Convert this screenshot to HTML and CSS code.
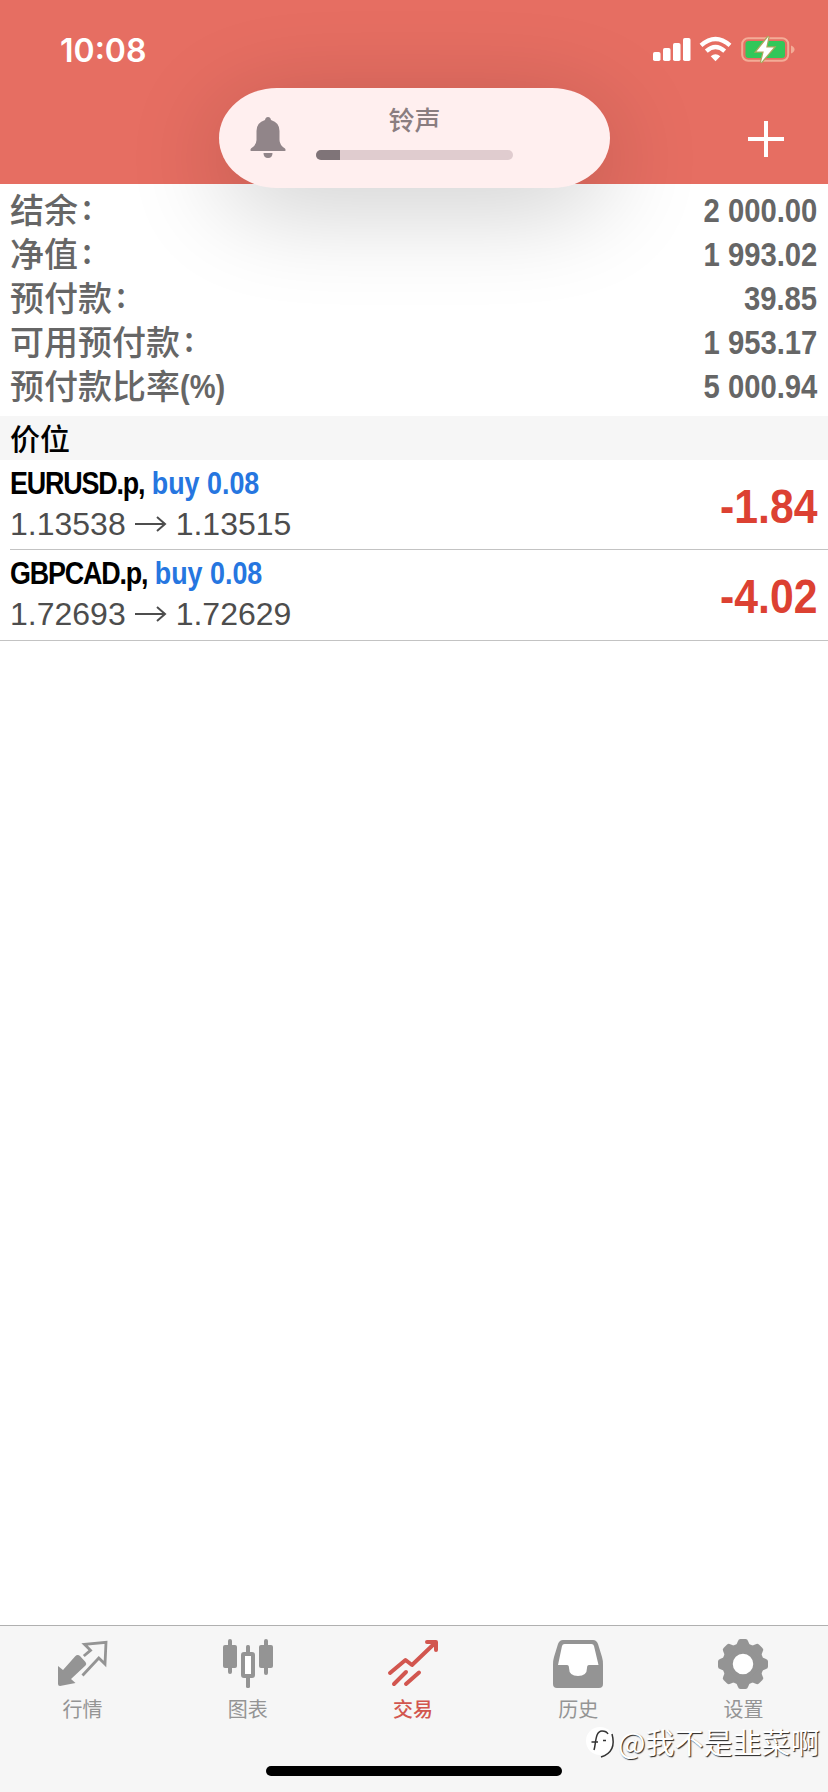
FILE: index.html
```html
<!DOCTYPE html>
<html lang="zh-CN">
<head>
<meta charset="utf-8">
<title>交易</title>
<link rel="stylesheet" href="styles.css">
</head>
<body>
<div class="screen">
  <header class="header">
    <div class="status">
      <span class="clock">10:08</span>
      <svg class="status-icons" width="146" height="30" viewBox="0 0 146 30">
        <g fill="#fff">
          <rect x="2" y="16" width="7.5" height="9" rx="1.8"/>
          <rect x="12" y="12" width="7.5" height="13" rx="1.8"/>
          <rect x="22" y="7" width="7.5" height="18" rx="1.8"/>
          <rect x="32" y="2" width="7.5" height="23" rx="1.8"/>
          <path d="M64.500 25.200 L59.700 20.300 Q64.500 16.300 69.300 20.300 Z"/>
        </g>
        <path d="M50 9.300 Q64.500 -3.500 79 9.300M55.300 15.200 Q64.500 7 73.700 15.200" fill="none" stroke="#fff" stroke-width="4.300"/>
        <rect x="91.200" y="2.200" width="46" height="22.600" rx="6" fill="none" stroke="#f3ac97" stroke-width="2"/>
        <rect x="94.500" y="5" width="39.500" height="17" rx="3" fill="#32c759"/>
        <path d="M140 9.500 Q143.500 11 143.500 13.500 Q143.500 16 140 17.500 Z" fill="#f3ac97"/>
        <path d="M117.500 .5 L105.500 15.500 H112.800 L110 26.500 L122.800 11.500 H115.200 Z" fill="#fff" stroke="#a9a85c" stroke-width="2.500" paint-order="stroke"/>
      </svg>
    </div>
    <div class="nav">
      <svg width="36" height="36" viewBox="0 0 36 36"><path d="M18 0V36M0 18H36" stroke="#fff" stroke-width="4"/></svg>
    </div>
  </header>

  <section class="summary">
    <div class="sum-row"><span>结余<i class="colon">:</i></span><b class="num">2 000.00</b></div>
    <div class="sum-row"><span>净值<i class="colon">:</i></span><b class="num">1 993.02</b></div>
    <div class="sum-row"><span>预付款<i class="colon">:</i></span><b class="num">39.85</b></div>
    <div class="sum-row"><span>可用预付款<i class="colon">:</i></span><b class="num">1 953.17</b></div>
    <div class="sum-row"><span>预付款比率<i class="percent">(%)</i></span><b class="num">5 000.94</b></div>
  </section>

  <h2 class="section-title">价位</h2>

  <section class="positions">
    <article class="position">
      <div class="info">
        <div class="symbol"><span class="name">EURUSD.p,</span> <span class="side">buy 0.08</span></div>
        <div class="prices"><span>1.13538</span><svg width="32" height="20" viewBox="0 0 32 20"><path d="M0 10H30M22 3L30 10L22 17" fill="none" stroke="#4d4d4d" stroke-width="2"/></svg><span>1.13515</span></div>
      </div>
      <b class="pnl">-1.84</b>
    </article>
    <article class="position">
      <div class="info">
        <div class="symbol"><span class="name">GBPCAD.p,</span> <span class="side">buy 0.08</span></div>
        <div class="prices"><span>1.72693</span><svg width="32" height="20" viewBox="0 0 32 20"><path d="M0 10H30M22 3L30 10L22 17" fill="none" stroke="#4d4d4d" stroke-width="2"/></svg><span>1.72629</span></div>
      </div>
      <b class="pnl">-4.02</b>
    </article>
  </section>

  <nav class="tabs">
    <div class="tab">
      <svg width="56" height="52" viewBox="0 0 56 52">
        <path d="M3 29L8 33L20 19.500Q22.500 17 25 19L30.500 25Q32 27 30.500 28.500L16 42L20.500 46L5 49Q3 49 3 47Z" fill="#949494"/>
        <path d="M28.800 19L35.500 13.300L29.500 7.300L51 5.300L50 27L43.800 21L27.500 38.500" fill="none" stroke="#949494" stroke-width="2.800"/>
      </svg>
      <span>行情</span>
    </div>
    <div class="tab">
      <svg width="56" height="52" viewBox="0 0 56 52" fill="#949494">
        <rect x="3" y="8" width="14" height="23" rx="2"/><rect x="8" y="2" width="4" height="35" rx="2"/>
        <rect x="39" y="8" width="14" height="23" rx="2"/><rect x="44" y="2" width="4" height="36" rx="2"/>
        <rect x="26" y="8" width="4" height="9" rx="1.500"/><rect x="26" y="38" width="4" height="13" rx="1.500"/>
        <rect x="23" y="17" width="10" height="22" rx="1" fill="#fff" stroke="#949494" stroke-width="4"/>
      </svg>
      <span>图表</span>
    </div>
    <div class="tab active">
      <svg width="56" height="52" viewBox="0 0 56 52" fill="none" stroke="#d2564f" stroke-width="4" stroke-linecap="round" stroke-linejoin="round">
        <path d="M5 36L20.500 23L27 28L50 6M42 5H51V13M9 47L21 35M21 47L34 35.500"/>
        <path d="M43 4H52V13Z" fill="#d2564f" stroke="none"/>
      </svg>
      <span>交易</span>
    </div>
    <div class="tab">
      <svg width="56" height="52" viewBox="0 0 56 52">
        <path d="M11 6H45L50 30L28 42L6 30Z" fill="#fff"/>
        <path fill="#949494" fill-rule="evenodd" d="M13 3H43Q46.500 3 48 7L52 20Q53 23 53 28V47Q53 51 49 51H7Q3 51 3 47V28Q3 23 4 20L8 7Q9.500 3 13 3ZM14.500 7Q12.500 7 12 9L8 28H17Q19 28 19 31Q19 39 28 39Q37 39 37 31Q37 28 39 28H48.500L44 9Q43.500 7 41.500 7Z"/>
      </svg>
      <span>历史</span>
    </div>
    <div class="tab">
      <svg width="56" height="52" viewBox="0 0 56 52">
        <defs><path id="tooth" d="M19.500 12L23 4Q23.500 2 25.500 2H30.500Q32.500 2 33 4L36.500 12Z"/></defs>
        <g fill="#949494">
          <circle cx="28" cy="27" r="15.500" fill="#fff" stroke="#949494" stroke-width="10.500"/>
          <use href="#tooth"/>
          <use href="#tooth" transform="rotate(45 28 27)"/>
          <use href="#tooth" transform="rotate(90 28 27)"/>
          <use href="#tooth" transform="rotate(135 28 27)"/>
          <use href="#tooth" transform="rotate(180 28 27)"/>
          <use href="#tooth" transform="rotate(225 28 27)"/>
          <use href="#tooth" transform="rotate(270 28 27)"/>
          <use href="#tooth" transform="rotate(315 28 27)"/>
        </g>
      </svg>
      <span>设置</span>
    </div>
  </nav>

  <div class="volume">
    <svg class="bell" width="36" height="42" viewBox="0 0 36 42" fill="#918589">
      <path d="M18 0Q20.500 0 21 3Q29.500 5.500 29.500 14V23Q29.500 28 35 31.500Q36.500 34 34.500 34H1.500Q-.5 34 1 31.500Q6.500 28 6.500 23V14Q6.500 5.500 15 3Q15.500 0 18 0Z"/>
      <path d="M13.500 36H22.500Q22.500 41 18 41Q13.500 41 13.500 36Z"/>
    </svg>
    <div class="level">
      <span>铃声</span>
      <div class="track"><div class="fill"></div></div>
    </div>
  </div>

  <div class="watermark">
    <svg width="30" height="34" viewBox="0 0 30 34">
      <circle cx="14" cy="15" r="14" fill="#fff"/>
      <path d="M5.500 16H12M8 24C10 18 9 5 16 5C19 5 21 6 22 8M26 8Q31 26 15 31M17 14.500H20" fill="none" stroke="#333" stroke-width="1.500"/>
    </svg>
    <span>@我不是韭菜啊</span>
  </div>
  <div class="home-bar"></div>
</div>
</body>
</html>
```

FILE: styles.css
```css
* { box-sizing: border-box; }

body {
  margin: 0;
  font-family: "Liberation Sans", "Noto Sans CJK SC", sans-serif;
}

svg { display: block; overflow: visible; }
i { font-style: normal; }

.screen {
  position: relative;
  display: flex;
  flex-direction: column;
  width: 828px;
  height: 1792px;
  overflow: hidden;
  background: #fff;
}

.header {
  flex: none;
  height: 184px;
  background: #e66e62;
}

.status {
  display: flex;
  justify-content: space-between;
  padding: 32px 31px 0 60px;
  height: 100px;
}

.clock {
  font: 600 32px/38px Inter, sans-serif;
  color: #fff;
}

.status-icons { margin-top: 4px; }

.nav {
  display: flex;
  justify-content: flex-end;
  padding: 21px 44px 0 0;
}

.summary {
  flex: none;
  height: 232px;
  padding: 4px 11px 0 10px;
  color: #666;
}

.sum-row {
  display: flex;
  justify-content: space-between;
  height: 44px;
  font: 500 34px/42px "Noto Sans CJK SC", sans-serif;
}

.colon {
  display: inline-block;
  padding-left: 4px;
  line-height: 30px;
  transform: translateY(-3px);
}

.percent {
  display: inline-block;
  font: bold 33px/40px "Liberation Sans", sans-serif;
  transform: translateY(-1px) scaleX(.88);
  transform-origin: left;
}

.num {
  font: bold 34px/44px "Liberation Sans", sans-serif;
  transform: scaleX(.86);
  transform-origin: right;
}

.section-title {
  flex: none;
  margin: 0;
  height: 44px;
  padding-left: 10px;
  background: #f6f6f6;
  font: 500 30px/42px "Noto Sans CJK SC", sans-serif;
}

.positions {
  flex: 1;
}

.position {
  display: flex;
  justify-content: space-between;
  height: 90px;
  padding-right: 11px;
  margin-left: 10px;
  border-bottom: 1px solid #c3c3c3;
}

.position:last-child {
  height: 91px;
  margin-left: 0;
  padding-left: 10px;
}

.symbol {
  height: 44px;
  font: bold 32px/47px "Liberation Sans", sans-serif;
  white-space: nowrap;
  transform: scaleX(.84);
  transform-origin: left;
}

.name { letter-spacing: -1.4px; }
.side { color: #2676e0; }

.prices {
  display: flex;
  align-items: center;
  gap: 9px;
  font-size: 32px;
  line-height: 40px;
  color: #4d4d4d;
}

.pnl {
  font-size: 48px;
  line-height: 93px;
  color: #dc4132;
  transform: scaleX(.89);
  transform-origin: right;
}

.tabs {
  flex: none;
  display: grid;
  grid-template-columns: repeat(5, 1fr);
  height: 167px;
  padding: 11px 2px 0 0;
  border-top: 1px solid #b0b0b0;
  background: #f6f6f6;
}

.tab {
  display: flex;
  flex-direction: column;
  align-items: center;
  gap: 5px;
  font: 20px/30px "Noto Sans CJK SC", sans-serif;
  color: #949494;
}

.active { color: #d2564f; font-weight: 500; }

/* Ringer level, floating over the header */
.volume {
  position: absolute;
  left: 219px;
  top: 88px;
  display: flex;
  width: 391px;
  height: 100px;
  padding: 0 97px 0 31px;
  border-radius: 58px / 50px;
  background: #ffefef;
  box-shadow: 0 20px 100px rgba(0, 0, 0, .2);
}

.bell { margin-top: 29px; }

.level {
  flex: 1;
  margin-left: 30px;
  padding-top: 13px;
  text-align: center;
  font: 500 26px/36px "Noto Sans CJK SC", sans-serif;
  color: #8a7d80;
}

.level span { display: block; }

.track {
  height: 10px;
  margin-top: 13px;
  border-radius: 5px;
  overflow: hidden;
  background: #e0cccf;
}

.fill {
  width: 24px;
  height: 10px;
  background: #7f7478;
}

.watermark {
  position: absolute;
  left: 586px;
  top: 1726px;
  display: flex;
  gap: 2px;
  font: 29px/30px "Noto Sans CJK SC", sans-serif;
  color: #fff;
  text-shadow: 1px 1px 1px #222;
  white-space: nowrap;
}

.home-bar {
  position: absolute;
  left: 266px;
  top: 1766px;
  width: 296px;
  height: 10px;
  border-radius: 5px;
  background: #000;
}
```
